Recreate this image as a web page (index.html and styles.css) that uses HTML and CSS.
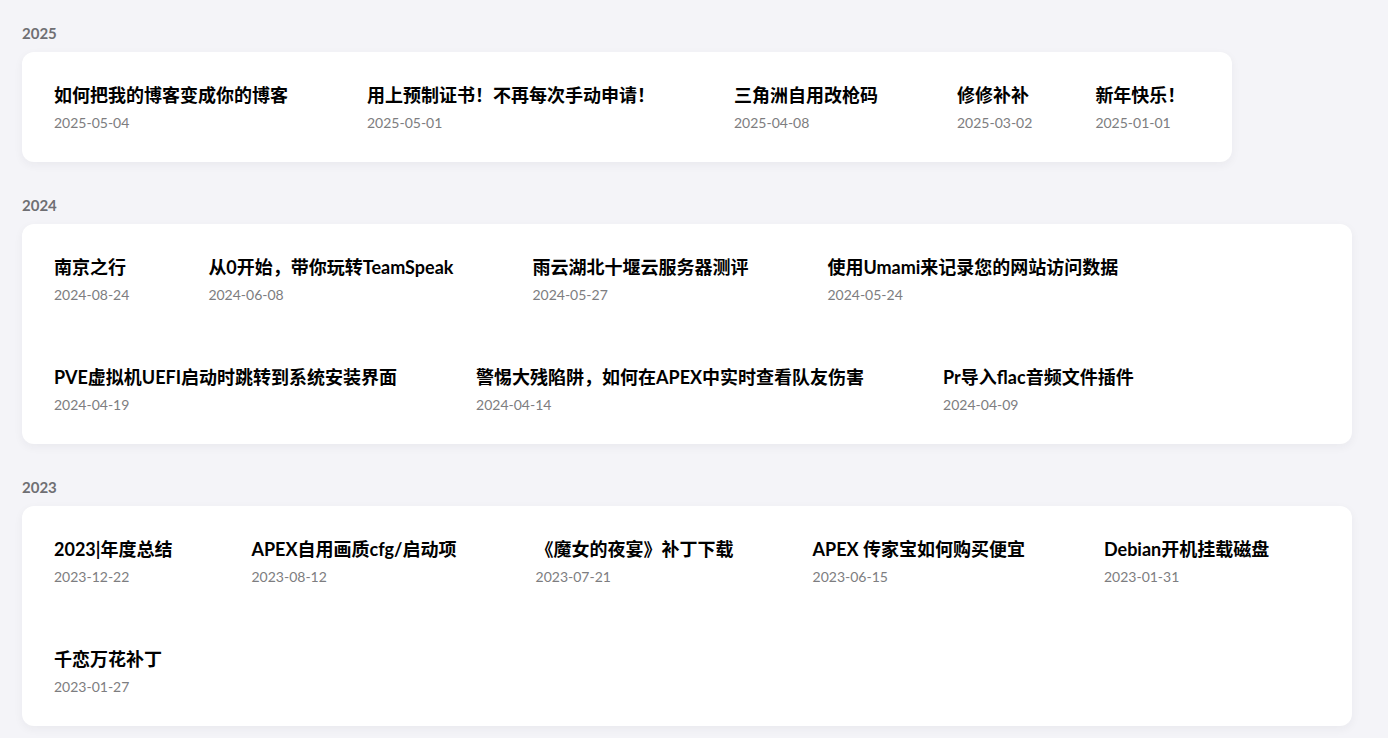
FILE: index.html
```html
<!DOCTYPE html>
<html lang="zh-CN">
<head>
<meta charset="utf-8">
<title>归档</title>
<link rel="stylesheet" href="styles.css">
</head>
<body>
<main class="archive">
  <section class="year-group">
    <h2 class="year">2025</h2>
    <div class="card">
      <a class="post"><span class="post-title">如何把我的博客变成你的博客</span><span class="post-date">2025-05-04</span></a>
      <a class="post"><span class="post-title">用上预制证书！不再每次手动申请！</span><span class="post-date">2025-05-01</span></a>
      <a class="post"><span class="post-title">三角洲自用改枪码</span><span class="post-date">2025-04-08</span></a>
      <a class="post post-compact"><span class="post-title">修修补补</span><span class="post-date">2025-03-02</span></a>
      <a class="post"><span class="post-title">新年快乐！</span><span class="post-date">2025-01-01</span></a>
    </div>
  </section>
  <section class="year-group">
    <h2 class="year">2024</h2>
    <div class="card">
      <a class="post"><span class="post-title">南京之行</span><span class="post-date">2024-08-24</span></a>
      <a class="post"><span class="post-title">从0开始，带你玩转TeamSpeak</span><span class="post-date">2024-06-08</span></a>
      <a class="post"><span class="post-title">雨云湖北十堰云服务器测评</span><span class="post-date">2024-05-27</span></a>
      <a class="post"><span class="post-title">使用Umami来记录您的网站访问数据</span><span class="post-date">2024-05-24</span></a>
      <a class="post"><span class="post-title">PVE虚拟机UEFI启动时跳转到系统安装界面</span><span class="post-date">2024-04-19</span></a>
      <a class="post"><span class="post-title">警惕大残陷阱，如何在APEX中实时查看队友伤害</span><span class="post-date">2024-04-14</span></a>
      <a class="post"><span class="post-title">Pr导入flac音频文件插件</span><span class="post-date">2024-04-09</span></a>
    </div>
  </section>
  <section class="year-group">
    <h2 class="year">2023</h2>
    <div class="card">
      <a class="post"><span class="post-title">2023|年度总结</span><span class="post-date">2023-12-22</span></a>
      <a class="post"><span class="post-title">APEX自用画质cfg/启动项</span><span class="post-date">2023-08-12</span></a>
      <a class="post"><span class="post-title">《魔女的夜宴》补丁下载</span><span class="post-date">2023-07-21</span></a>
      <a class="post"><span class="post-title">APEX 传家宝如何购买便宜</span><span class="post-date">2023-06-15</span></a>
      <a class="post"><span class="post-title">Debian开机挂载磁盘</span><span class="post-date">2023-01-31</span></a>
      <a class="post"><span class="post-title">千恋万花补丁</span><span class="post-date">2023-01-27</span></a>
    </div>
  </section>
</main>
</body>
</html>
```

FILE: styles.css
```css
html, body {
  margin: 0;
  padding: 0;
}

body {
  background: #f4f4f8;
  font-family: Lato, "Noto Sans CJK SC", sans-serif;
  color: #000;
}

.archive {
  width: 1330px;
  padding: 23px 0 0 22px;
}

.year-group {
  margin-bottom: 33px;
}

.year {
  margin: 0 0 9px;
  font-size: 15px;
  line-height: 20px;
  font-weight: 700;
  color: #6f6f73;
}

.card {
  display: flex;
  flex-wrap: wrap;
  column-gap: 79px;
  row-gap: 59px;
  width: fit-content;
  max-width: 100%;
  box-sizing: border-box;
  padding: 30px 47px 29px 32px;
  background: #fff;
  border-radius: 12px;
  box-shadow: 0 3px 10px rgba(30, 30, 60, 0.05);
}

.post {
  display: flex;
  flex-direction: column;
  cursor: pointer;
}

.post-compact {
  margin-right: -16px;
}

.post-title {
  font-family: Lato, "Noto Sans CJK SC", sans-serif;
  font-size: 18px;
  line-height: 26px;
  font-weight: 700;
  color: #000;
  white-space: nowrap;
}

.post-date {
  margin-top: 5px;
  font-size: 14px;
  line-height: 20px;
  color: #7d7d80;
}
```
